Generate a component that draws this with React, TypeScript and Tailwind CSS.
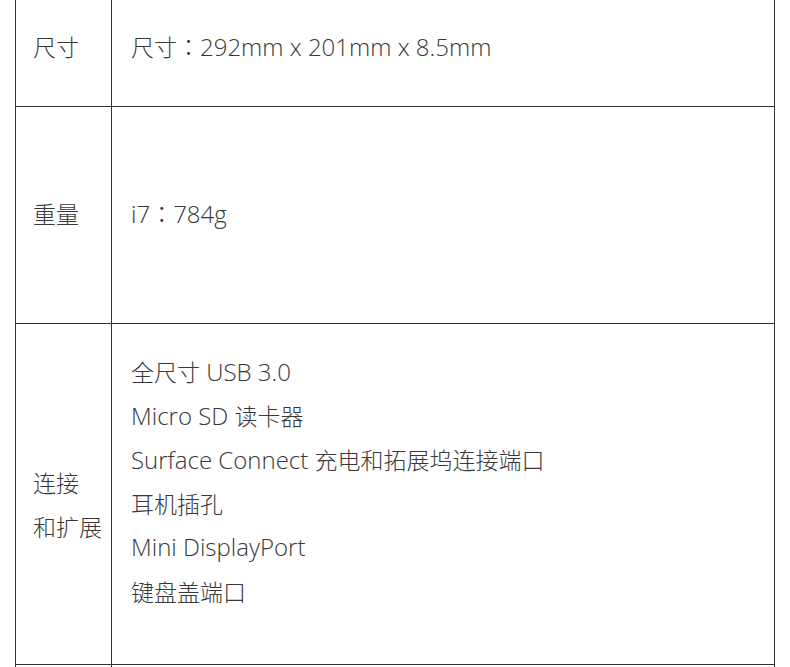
const rows = [
  { label: "尺寸", value: "尺寸：292mm x 201mm x 8.5mm" },
  { label: "重量", value: "i7：784g" },
];

const ports = [
  "全尺寸 USB 3.0",
  "Micro SD 读卡器",
  "Surface Connect 充电和拓展坞连接端口",
  "耳机插孔",
  "Mini DisplayPort",
  "键盘盖端口",
];

const CJK = /[\u3000-\u303f\u4e00-\u9fff\uff00-\uffef]/;

// split a line into latin / CJK runs so each gets its own size
const Mixed = ({ text }: { text: string }) => {
  const parts = text.match(/[\u3000-\u303f\u4e00-\u9fff\uff00-\uffef]+|[^\u3000-\u303f\u4e00-\u9fff\uff00-\uffef]+/g) || [];
  return (
    <>
      {parts.map((p, i) => {
        if (CJK.test(p)) {
          const colon = p.indexOf("：");
          return (
            <span key={i} className="text-[23px] leading-[44px] font-light font-['Noto_Sans_CJK_SC',sans-serif]">
              {colon >= 0 ? (
                <>
                  {p.slice(0, colon)}
                  <span className="font-['Noto_Sans_CJK_TC',sans-serif]">：</span>
                  {p.slice(colon + 1)}
                </>
              ) : (
                p
              )}
            </span>
          );
        }
        return (
          <span key={i} className="text-[24px] leading-[44px] font-light">
            {p}
          </span>
        );
      })}
    </>
  );
};

const Line = ({ text }: { text: string }) => (
  <p className="h-[44px] leading-[44px] whitespace-nowrap">
    <Mixed text={text} />
  </p>
);

export default function App() {
  return (
    <div className="min-h-screen bg-white overflow-hidden text-[24px] leading-[44px] text-[#383838] font-['Open_Sans','Noto_Sans_CJK_SC',sans-serif]">
      <div className="mx-[15px] -mt-[12px] border-l border-r border-t border-[#333]">
        {/* 尺寸 */}
        <div className="flex h-[118px] border-b border-[#333]">
          <div className="w-[96px] shrink-0 border-r border-[#333] flex items-center pl-[17px] pb-[4px]">
            <Line text={rows[0].label} />
          </div>
          <div className="flex-1 flex items-center pl-[19px] pb-[4px]">
            <Line text={rows[0].value} />
          </div>
        </div>

        {/* 重量 */}
        <div className="flex h-[217px] border-b border-[#333]">
          <div className="w-[96px] shrink-0 border-r border-[#333] flex items-center pl-[17px] pb-[4px]">
            <Line text={rows[1].label} />
          </div>
          <div className="flex-1 flex items-center pl-[19px] pb-[4px]">
            <Line text={rows[1].value} />
          </div>
        </div>

        {/* 连接和扩展 */}
        <div className="flex h-[341px] border-b border-[#333]">
          <div className="w-[96px] shrink-0 border-r border-[#333] flex items-center pl-[17px] pt-[19px]">
            <div>
              <Line text="连接" />
              <Line text="和扩展" />
            </div>
          </div>
          <div className="flex-1 pl-[19px] pt-[25px]">
            {ports.map((p) => (
              <Line key={p} text={p} />
            ))}
          </div>
        </div>

        <div className="flex h-[120px]">
          <div className="w-[96px] shrink-0 border-r border-[#333]" />
          <div className="flex-1" />
        </div>
      </div>
    </div>
  );
}
